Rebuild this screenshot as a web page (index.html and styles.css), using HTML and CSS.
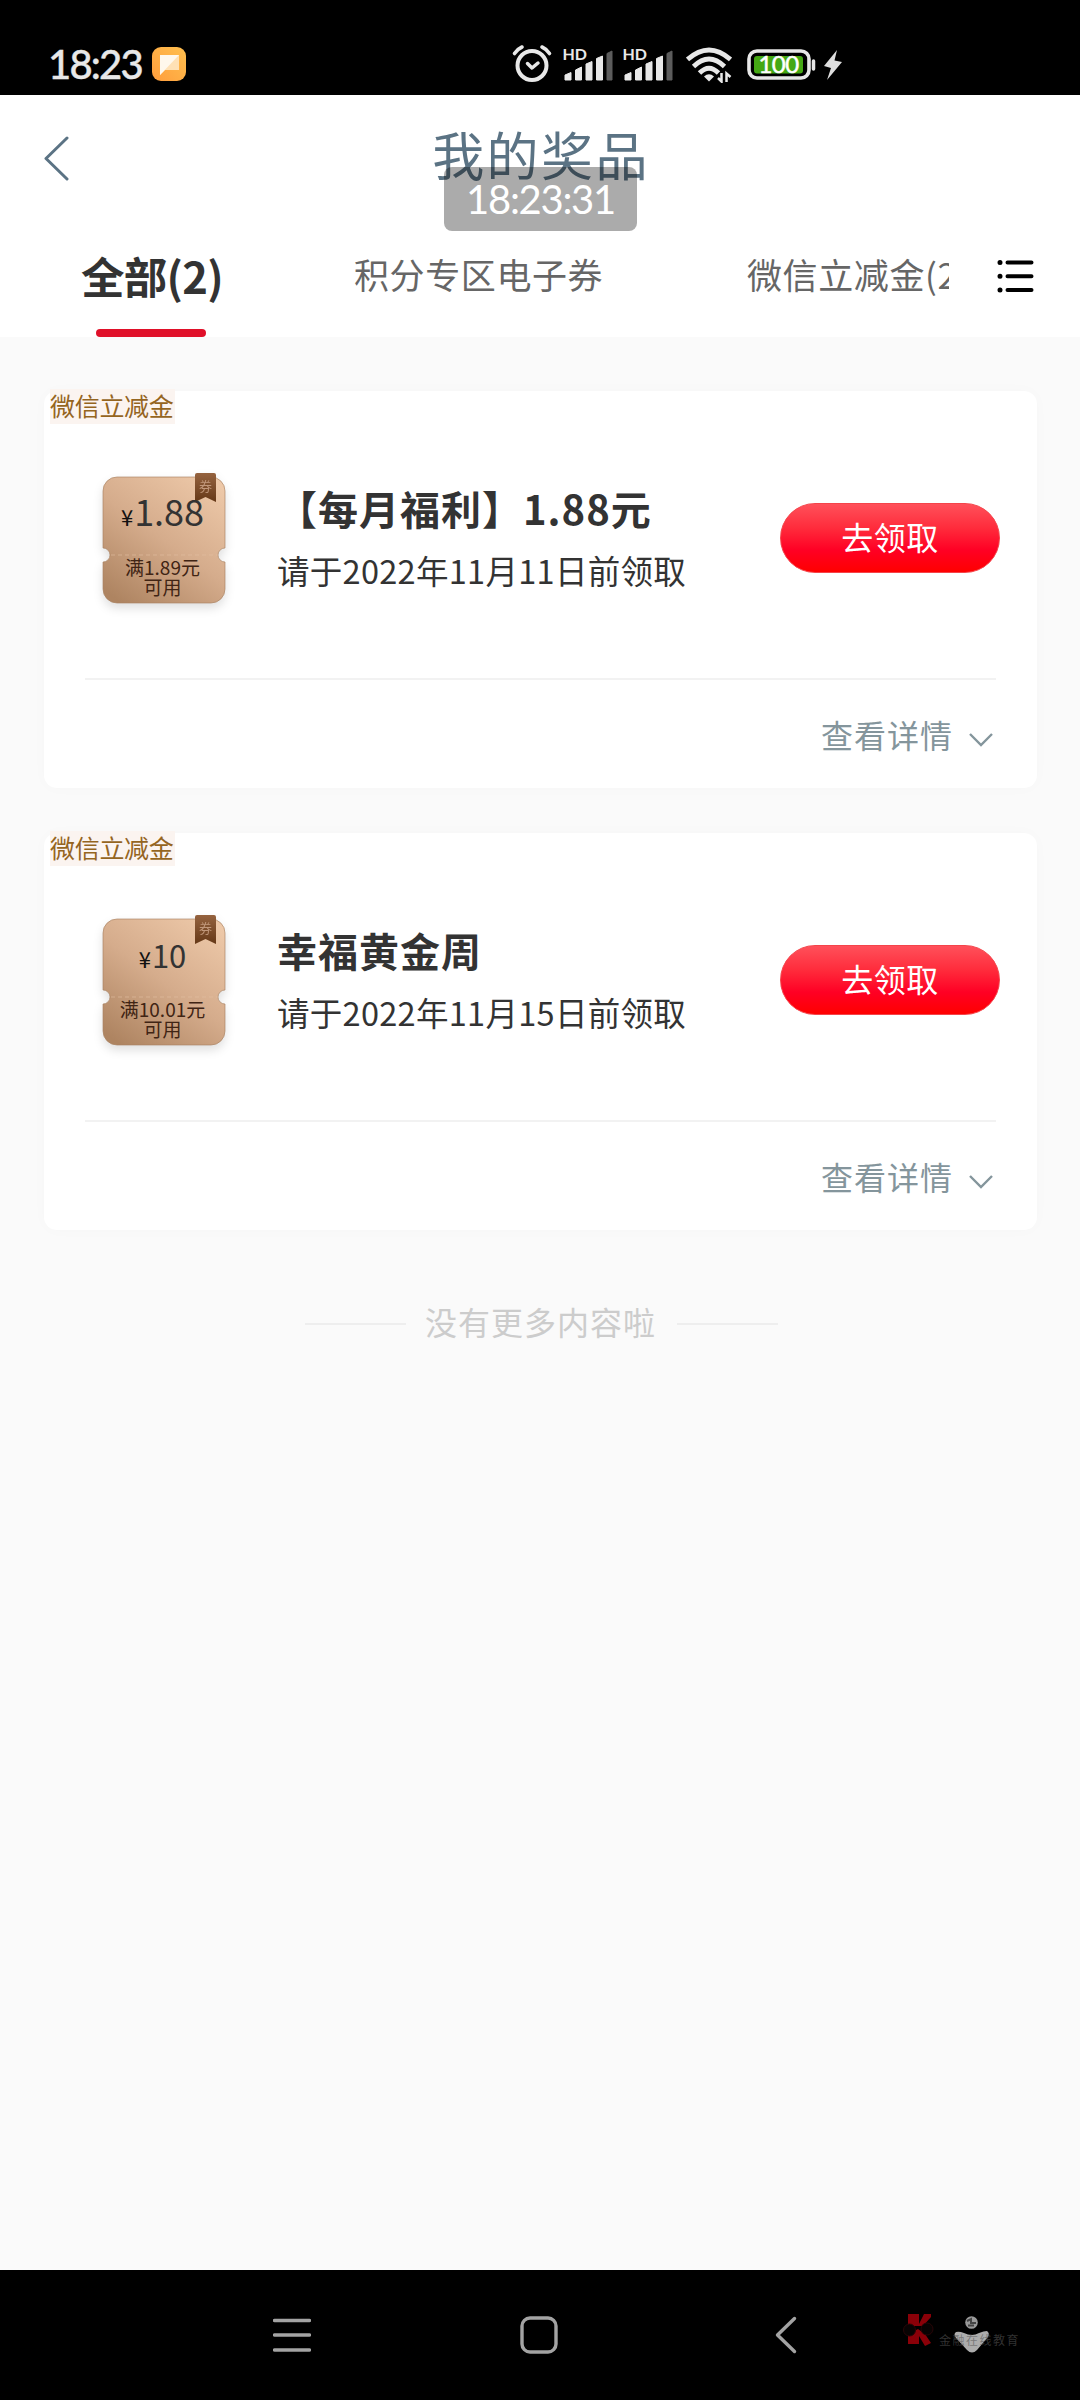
FILE: index.html
```html
<!DOCTYPE html>
<html lang="zh-CN">
<head>
<meta charset="utf-8">
<title>我的奖品</title>
<link rel="stylesheet" href="styles.css">
</head>
<body>
<svg class="defs" width="0" height="0" aria-hidden="true">
  <defs>
    <linearGradient id="copper" x1="0.85" y1="0" x2="0.15" y2="1">
      <stop offset="0" stop-color="#edc8a8"/>
      <stop offset="0.5" stop-color="#d5ac8c"/>
      <stop offset="1" stop-color="#ae8461"/>
    </linearGradient>
    <linearGradient id="ribbon" x1="0" y1="0" x2="0" y2="1">
      <stop offset="0" stop-color="#95633f"/>
      <stop offset="1" stop-color="#653817"/>
    </linearGradient>
    <linearGradient id="amber" x1="0" y1="1" x2="1" y2="0">
      <stop offset="0" stop-color="#ff9d3c"/>
      <stop offset="1" stop-color="#ffc04f"/>
    </linearGradient>
    <symbol id="coupon" viewBox="0 0 138 146">
      <path d="M20 7H114A14 14 0 0 1 128 21V78A7 7 0 0 0 128 92V119A14 14 0 0 1 114 133H20A14 14 0 0 1 6 119V92A7 7 0 0 0 6 78V21A14 14 0 0 1 20 7Z" fill="url(#copper)" stroke="#a98263" stroke-opacity=".65"/>
      <path d="M14 85H121" stroke="#e2bfa2" stroke-width="1" stroke-dasharray="4 3" opacity=".6"/>
      <path d="M98 5Q98 3 100 3H117Q119 3 119 5V32L108.500 27L98 32Z" fill="url(#ribbon)"/>
      <text x="108.500" y="21" class="ribbon-text">券</text>
    </symbol>
    <symbol id="signal" viewBox="0 0 50 34">
      <text x="-.5" y="13" class="hd">HD</text>
      <path d="M2 28L8 25.500V33H2ZM12.500 23L18.500 20V33H12.500ZM23 17L29 14.500V33H23ZM33.500 11.500L39.500 9V33H33.500Z" fill="#e8e8e8" stroke="#e8e8e8" stroke-width="1" stroke-linejoin="round"/>
      <path d="M44 6.500L49 4V33H44Z" fill="#5c5c5c" stroke="#5c5c5c" stroke-linejoin="round"/>
    </symbol>
  </defs>
</svg>

<div class="screen">
  <header class="status">
    <span class="clock">18:23</span>
    <svg class="msg" width="34" height="34" viewBox="0 0 34 34"><rect width="34" height="34" rx="9" fill="url(#amber)"/><path d="M8 8H27V23H13L8 28Z" fill="#ffe1b5"/><path d="M8 8H27L8 28Z" fill="#fff8ec"/></svg>
    <div class="indicators">
      <svg width="40" height="40" viewBox="0 0 40 40" fill="none" stroke="#e8e8e8" stroke-linecap="round" stroke-linejoin="round"><circle cx="20" cy="21.500" r="14.500" stroke-width="4"/><path d="M2.500 9.500Q5.500 5 10 3M37.500 9.500Q34.500 5 30 3" stroke-width="3.600"/><path d="M15.500 19.500L20 24L26 19" stroke-width="3.500"/></svg>
      <svg class="sig-one" width="50" height="34"><use href="#signal"/></svg>
      <svg class="sig-two" width="50" height="34"><use href="#signal"/></svg>
      <svg class="wifi" width="46" height="36" viewBox="0 0 46 36"><g fill="none" stroke="#e8e8e8" stroke-width="4.800"><path d="M1.500 12.500Q23 -6.500 44.500 12.500"/><path d="M7.500 19.500Q23 4.500 38.500 19.500"/><path d="M13.500 26Q23 16.500 32.500 26"/></g><path d="M18 29.500Q23 25 28 29.500L23 34.500Z" fill="#e8e8e8"/><path d="M32 29H37V25L40 25V29H45V36H31Z" fill="#000"/><path d="M35.500 26V34.500L32 31M40.500 35V26.500L44.500 30" fill="none" stroke="#e8e8e8" stroke-width="2.500"/></svg>
      <svg class="battery" width="70" height="32" viewBox="0 0 70 32"><rect x="2" y="2" width="60" height="27" rx="8" fill="none" stroke="#e8e8e8" stroke-width="3.600"/><rect x="7" y="7" width="49" height="17.500" rx="3" fill="#45a814"/><path d="M66.500 12V20" stroke="#e8e8e8" stroke-width="3.500" stroke-linecap="round"/><text x="31.500" y="24" class="level">100</text></svg>
      <svg class="bolt" width="18" height="32" viewBox="0 0 18 32"><path d="M13 1L0 17L7 19L3 31L18 13L10.500 11.500Z" fill="#dedede"/></svg>
    </div>
  </header>

  <div class="titlebar">
    <svg class="back" width="26" height="48" viewBox="0 0 26 48"><path d="M24 3L3 23.500L24 44" fill="none" stroke="#5b7384" stroke-width="3" stroke-linecap="round" stroke-linejoin="round"/></svg>
    <h1 class="title">我的奖品</h1>
    <div class="toast">18:23:31</div>
  </div>

  <nav class="tabs">
    <div class="tab active"><span>全部(2)</span><i class="underline"></i></div>
    <div class="tab second">积分专区电子券</div>
    <div class="tab third">微信立减金(2)</div>
    <svg class="menu" width="38" height="34" viewBox="0 0 38 34" stroke="#000" stroke-linecap="round"><path d="M10.500 3.500H34.500M10.500 17.200H34.500M10.500 31H34.500" stroke-width="4"/><path d="M3 3.500H3.010M3 17.200H3.010M3 31H3.010" stroke-width="5"/></svg>
  </nav>

  <main class="list">
    <article class="card">
      <span class="tag">微信立减金</span>
      <div class="body">
        <div class="coupon">
          <svg class="coupon-bg" width="138" height="146"><use href="#coupon"/></svg>
          <p class="price"><small>¥</small>1.88</p>
          <p class="cond">满1.89元<br>可用</p>
        </div>
        <div class="info">
          <h2>【每月福利】1.88元</h2>
          <p>请于2022年11月11日前领取</p>
        </div>
        <button class="claim">去领取</button>
      </div>
      <div class="more"><span>查看详情</span><svg width="26" height="16" viewBox="0 0 26 16"><path d="M2 2L13 13L24 2" fill="none" stroke="#84959c" stroke-width="2.400"/></svg></div>
    </article>

    <article class="card">
      <span class="tag">微信立减金</span>
      <div class="body">
        <div class="coupon">
          <svg class="coupon-bg" width="138" height="146"><use href="#coupon"/></svg>
          <p class="price small"><small>¥</small>10</p>
          <p class="cond">满10.01元<br>可用</p>
        </div>
        <div class="info">
          <h2>幸福黄金周</h2>
          <p>请于2022年11月15日前领取</p>
        </div>
        <button class="claim">去领取</button>
      </div>
      <div class="more"><span>查看详情</span><svg width="26" height="16" viewBox="0 0 26 16"><path d="M2 2L13 13L24 2" fill="none" stroke="#84959c" stroke-width="2.400"/></svg></div>
    </article>

    <div class="end"><i></i><span>没有更多内容啦</span><i></i></div>
  </main>

  <footer class="navbar">
    <svg class="nav-menu" width="38" height="34" viewBox="0 0 38 34"><path d="M1.500 2.500H36.500M1.500 17H36.500M1.500 32H36.500" stroke="#a3a3a3" stroke-width="3.500" stroke-linecap="round"/></svg>
    <svg class="nav-home" width="38" height="38" viewBox="0 0 38 38"><rect x="2" y="2" width="34" height="34" rx="8" fill="none" stroke="#a3a3a3" stroke-width="3.400"/></svg>
    <svg class="nav-back" width="22" height="38" viewBox="0 0 22 38"><path d="M19.500 2.500L2.500 19L19.500 35.500" fill="none" stroke="#a3a3a3" stroke-width="3.400" stroke-linecap="round" stroke-linejoin="round"/></svg>
    <svg class="brand" width="120" height="48" viewBox="0 0 120 48">
      <path d="M8 7H19V17L24 7H31V10L23 19H8ZM8 27L18 22L25 27L31 36L25 39L19 29V37H8Z" fill="#8a0008"/>
      <circle cx="9.500" cy="23" r="6" fill="#080303" stroke="#280507"/><circle cx="27" cy="22" r="6" fill="#080303" stroke="#280507"/>
      <path d="M56 25Q59 24 64 26Q72 30 79 26Q84 24 87 24Q90 26 88 30L77 43Q72 48 67 43L56 31Q53 27 56 25Z" fill="#acacac"/>
      <circle cx="71.500" cy="15.500" r="6.300" fill="#999"/><path d="M67 14L71 12V16H76M68 18.500H74" stroke="#444" stroke-width="2" fill="none"/>
      <text x="39" y="38" class="brand-text">金融在线教育</text>
    </svg>
  </footer>
</div>
</body>
</html>
```
FILE: styles.css
```css
* { box-sizing: border-box; }
body {
  margin: 0;
  font-family: "Noto Sans CJK SC", "Noto Sans", sans-serif;
  color: #333;
  background: #fafafa;
}
h1, h2, p { margin: 0; font-weight: 400; }
svg { display: block; flex: none; }
.defs { position: absolute; }
.screen {
  width: 1080px;
  height: 2400px;
  display: flex;
  flex-direction: column;
  overflow: hidden;
}

.status {
  height: 95px;
  flex: none;
  background: #000;
  display: flex;
  align-items: flex-start;
  padding-left: 48px;
}
.clock {
  width: 104px;
  padding-top: 40px;
  font: 500 40px/48px Lato, sans-serif;
  color: #e8e8e8;
  letter-spacing: -1.800px;
  -webkit-text-stroke: .4px #e8e8e8;
}
.msg { margin-top: 47px; }
.indicators {
  margin: 44px 0 0 326px;
  display: flex;
}
.sig-one { margin: 3px 0 0 11px; }
.sig-two { margin: 3px 0 0 10px; }
.wifi { margin: 3px 0 0 13px; }
.battery { margin: 5px 0 0 15px; }
.bolt { margin: 5px 0 0 7px; }
.hd { font: 700 16px Lato, sans-serif; fill: #e8e8e8; }
.level { font: 400 24px Lato, sans-serif; fill: #fff; stroke: #fff; stroke-width: .5px; text-anchor: middle; letter-spacing: -.6px; }

.titlebar {
  position: relative;
  height: 137px;
  flex: none;
  background: #fff;
  display: flex;
  justify-content: center;
}
.back { position: absolute; left: 43px; top: 40px; }
.title {
  font-size: 52px;
  line-height: 60px;
  padding-top: 29px;
  letter-spacing: 2.400px;
  margin-left: 2px;
  color: #5b7384;
}
.toast {
  position: absolute;
  left: 444px;
  top: 72px;
  width: 193px;
  height: 64px;
  border-radius: 8px;
  background: rgba(0, 0, 0, .33);
  color: #fff;
  font: 400 40px/65px Lato, sans-serif;
  letter-spacing: -1.300px;
  text-align: center;
}

.tabs {
  height: 105px;
  flex: none;
  background: #fff;
  display: flex;
  padding-left: 81px;
  font-size: 35px;
  line-height: 50px;
  letter-spacing: .600px;
  color: #666;
}
.tab { flex: none; padding-top: 17px; white-space: nowrap; }
.active {
  width: 273px;
  padding-top: 19px;
  font-size: 43.500px;
  font-weight: 700;
  letter-spacing: -.700px;
  color: #333;
}
.underline {
  display: block;
  width: 110px;
  height: 8px;
  margin: 28px 0 0 15px;
  border-radius: 4px;
  background: #e01029;
}
.second { width: 393px; }
.third { width: 202px; overflow: hidden; }
.menu { margin: 27px 0 0 48px; }

.list {
  flex: 1;
  padding: 54px 43px 0 44px;
  display: flex;
  flex-direction: column;
  gap: 45px;
}
.card {
  height: 397px;
  flex: none;
  padding: 0 41px 0 41px;
  border-radius: 13px;
  background: #fff;
  box-shadow: 0 0 16px rgba(0, 0, 0, .018);
}
.tag {
  display: block;
  width: 125px;
  height: 35px;
  margin: -2px 0 0 -35px;
  font-size: 25px;
  line-height: 33px;
  letter-spacing: -.300px;
  background: #fbf4f0;
  color: #95651f;
  white-space: nowrap;
}
.body {
  height: 256px;
  border-bottom: 2px solid #f2f2f2;
  display: flex;
}
.coupon {
  position: relative;
  width: 156px;
  height: 146px;
  margin: 46px 0 0 12px;
  flex: none;
}
.coupon-bg {
  position: absolute;
  left: 0;
  top: 0;
  filter: drop-shadow(0 5px 5px rgba(0, 0, 0, .12));
}
.ribbon-text { font: 400 13px "Noto Sans CJK SC", sans-serif; fill: #c0977a; text-anchor: middle; }
.price {
  position: relative;
  width: 131px;
  padding-top: 20px;
  font-size: 36px;
  line-height: 40px;
  height: 87px;
  text-align: center;
  white-space: nowrap;
}
.price small { font-size: 22px; margin-right: 1px; color: #111; }
.price.small { font-size: 31px; padding-top: 23px; }
.cond {
  position: relative;
  width: 131px;
  font-size: 19px;
  line-height: 20px;
  text-align: center;
  color: #402414;
}
.info { width: 526px; flex: none; padding-top: 56px; margin-left: 24px; }
.info h2 {
  font-size: 40px;
  line-height: 56px;
  font-weight: 700;
  letter-spacing: 1px;
  white-space: nowrap;
}
.info p {
  margin-top: 10px;
  font-size: 32.500px;
  line-height: 48px;
  letter-spacing: .300px;
  white-space: nowrap;
}
.claim {
  width: 220px;
  height: 70px;
  flex: none;
  margin: 79px 0 0 -23px;
  padding: 0 0 5px;
  border: 1px solid #f4444a;
  border-radius: 36px;
  background: linear-gradient(#ff505a 0%, #ff2c3c 35%, #ff0024 68%, #ff0000 100%);
  color: #fff;
  font: 400 32px/60px "Noto Sans CJK SC", sans-serif;
  letter-spacing: .500px;
}
.more {
  height: 108px;
  display: flex;
  justify-content: flex-end;
  align-items: center;
  gap: 15px;
  padding: 0 2px 0 0;
  font-size: 32px;
  line-height: 48px;
  letter-spacing: 1px;
  color: #84959c;
}
.more svg { margin-top: 11px; }
.end {
  margin-top: 22px;
  display: flex;
  align-items: center;
  padding-left: 261px;
  font-size: 32px;
  line-height: 48px;
  letter-spacing: 1px;
  color: #ccc;
}
.end span { margin: 0 21px 0 19px; }
.end i { width: 101px; height: 2px; margin-top: 6px; background: #eee; }

.navbar {
  height: 130px;
  flex: none;
  background: #000;
  display: flex;
  align-items: flex-start;
  padding-left: 273px;
}
.nav-menu { margin-top: 48px; }
.nav-home { margin: 46px 0 0 209px; }
.nav-back { margin: 46px 0 0 217px; }
.brand { margin: 37px 0 0 103px; }
.brand-text { font: 400 12px "Noto Sans CJK SC", sans-serif; letter-spacing: 1.500px; fill: #555; fill-opacity: .6; }
```
